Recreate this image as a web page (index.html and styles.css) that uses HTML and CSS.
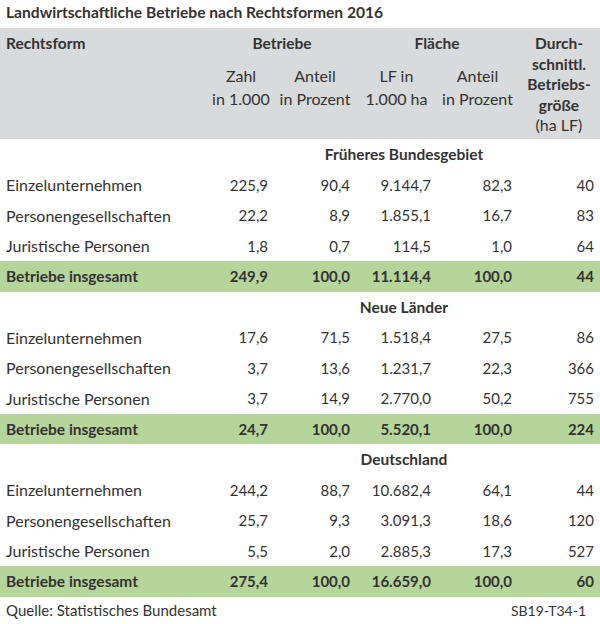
FILE: index.html
```html
<!DOCTYPE html>
<html lang="de">
<head>
<meta charset="utf-8">
<title>Landwirtschaftliche Betriebe nach Rechtsformen 2016</title>
<link rel="stylesheet" href="styles.css">
</head>
<body>
<div class="page">
  <h1 class="title">Landwirtschaftliche Betriebe nach Rechtsformen 2016</h1>
  <div class="head">
    <div class="h-form">Rechtsform</div>
    <div class="h-group h-betr">Betriebe</div>
    <div class="h-group h-flae">Fläche</div>
    <div class="h-durch">Durch-<br>schnittl.<br>Betriebs-<br>größe<br><span class="reg">(ha LF)</span></div>
    <div class="h-sub c2">Zahl<br>in 1.000</div>
    <div class="h-sub c3">Anteil<br>in Prozent</div>
    <div class="h-sub c4">LF in<br>1.000 ha</div>
    <div class="h-sub c5">Anteil<br>in Prozent</div>
  </div>

  <div class="row section"><span>Früheres Bundesgebiet</span></div>
  <div class="row"><span class="lbl">Einzelunternehmen</span><span>225,9</span><span>90,4</span><span>9.144,7</span><span>82,3</span><span>40</span></div>
  <div class="row"><span class="lbl">Personengesellschaften</span><span>22,2</span><span>8,9</span><span>1.855,1</span><span>16,7</span><span>83</span></div>
  <div class="row"><span class="lbl">Juristische Personen</span><span>1,8</span><span>0,7</span><span>114,5</span><span>1,0</span><span>64</span></div>
  <div class="row total"><span class="lbl">Betriebe insgesamt</span><span>249,9</span><span>100,0</span><span>11.114,4</span><span>100,0</span><span>44</span></div>

  <div class="row section"><span>Neue Länder</span></div>
  <div class="row"><span class="lbl">Einzelunternehmen</span><span>17,6</span><span>71,5</span><span>1.518,4</span><span>27,5</span><span>86</span></div>
  <div class="row"><span class="lbl">Personengesellschaften</span><span>3,7</span><span>13,6</span><span>1.231,7</span><span>22,3</span><span>366</span></div>
  <div class="row"><span class="lbl">Juristische Personen</span><span>3,7</span><span>14,9</span><span>2.770,0</span><span>50,2</span><span>755</span></div>
  <div class="row total"><span class="lbl">Betriebe insgesamt</span><span>24,7</span><span>100,0</span><span>5.520,1</span><span>100,0</span><span>224</span></div>

  <div class="row section"><span>Deutschland</span></div>
  <div class="row"><span class="lbl">Einzelunternehmen</span><span>244,2</span><span>88,7</span><span>10.682,4</span><span>64,1</span><span>44</span></div>
  <div class="row"><span class="lbl">Personengesellschaften</span><span>25,7</span><span>9,3</span><span>3.091,3</span><span>18,6</span><span>120</span></div>
  <div class="row"><span class="lbl">Juristische Personen</span><span>5,5</span><span>2,0</span><span>2.885,3</span><span>17,3</span><span>527</span></div>
  <div class="row total"><span class="lbl">Betriebe insgesamt</span><span>275,4</span><span>100,0</span><span>16.659,0</span><span>100,0</span><span>60</span></div>

  <div class="foot"><span class="src">Quelle: Statistisches Bundesamt</span><span class="code">SB19-T34-1</span></div>
</div>
</body>
</html>
```

FILE: styles.css
```css
html, body {
  margin: 0;
  padding: 0;
  background: #ffffff;
}
body {
  font-family: Lato, "Noto Sans", sans-serif;
  color: #333333;
  font-size: 15px;
}
.page {
  width: 600px;
  height: 624px;
  overflow: hidden;
}
.title {
  margin: 0;
  height: 28px;
  padding: 3px 0 0 6px;
  box-sizing: border-box;
  font-size: 15.6px;
  font-weight: 700;
  line-height: 18px;
}
.head {
  background: #d9dadb;
  display: grid;
  grid-template-columns: 208px 66px 82px 81px 81px 82px;
  grid-template-rows: 20.5px auto;
  align-content: start;
  padding: 5px 0 3.5px;
  height: 111px;
  box-sizing: border-box;
  line-height: 20.5px;
  font-size: 15.5px;
}
.h-form {
  grid-column: 1;
  grid-row: 1;
  font-weight: 700;
  padding-left: 6px;
}
.h-group {
  font-weight: 700;
  text-align: center;
  grid-row: 1;
}
.h-betr { grid-column: 2 / 4; }
.h-flae { grid-column: 4 / 6; }
.h-durch {
  grid-column: 6;
  grid-row: 1 / 3;
  font-weight: 700;
  text-align: center;
}
.reg { font-weight: 400; font-size: 16px; }
.h-sub {
  grid-row: 2;
  align-self: start;
  text-align: center;
  margin-top: 10px;
  line-height: 23px;
  font-size: 16px;
}
.c2 { grid-column: 2; }
.c3 { grid-column: 3; }
.c4 { grid-column: 4; }
.c5 { grid-column: 5; }

.row {
  display: grid;
  grid-template-columns: 208px 66px 82px 81px 81px 82px;
  height: 30.5px;
  align-items: center;
  text-align: right;
}
.row > span {
  padding-right: 6px;
}
.row > .lbl {
  text-align: left;
  padding-left: 6px;
  padding-right: 0;
  font-size: 16px;
}
.section {
  grid-template-columns: 208px 392px;
  font-weight: 700;
  font-size: 15.5px;
}
.section > span {
  grid-column: 2;
  text-align: center;
  padding: 0;
}
.total {
  background: #b6d59b;
  font-weight: 700;
}
.total > .lbl {
  font-size: 15.5px;
}
.foot {
  display: flex;
  justify-content: space-between;
  align-items: baseline;
  padding: 4px 14px 0 6px;
  line-height: 18px;
}
.src { font-size: 15px; }
.code { font-size: 14px; }
```
